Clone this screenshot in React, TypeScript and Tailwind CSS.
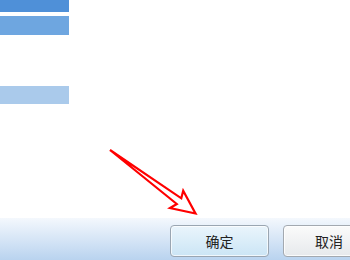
export default function App() {
  return (
    <div className="relative w-[350px] h-[260px] bg-white overflow-hidden flex flex-col font-['Microsoft_YaHei','Noto_Sans_CJK_SC',sans-serif]">
      {/* list rows */}
      <div className="flex-1 flex flex-col">
        <div className="w-[69px] h-[12px] bg-[#4f90d8]" />
        <div className="w-[69px] h-[19px] mt-[4px] bg-[#6ea6e0]" />
        <div className="w-[69px] h-[18px] mt-[51px] bg-[#aacaeb]" />
      </div>

      {/* button bar */}
      <div className="h-[42px] bg-gradient-to-b from-[#f4f8fd] to-[#b9d3ef] flex items-start pt-[7px] pl-[170px] gap-[14px]">
        <button className="w-[99px] h-[32px] shrink-0 rounded-[4px] border border-[#9aa6b2] bg-gradient-to-b from-[#eaf5fc] to-[#cbe5f5] text-[14px] text-[#222] shadow-[inset_0_0_0_1px_rgba(255,255,255,0.7)] pt-[1px]">
          确定
        </button>
        <button className="w-[99px] h-[32px] shrink-0 rounded-[4px] border border-[#a3a9b0] bg-gradient-to-b from-[#fbfbfb] to-[#e6e9ec] text-[14px] text-[#222] shadow-[inset_0_0_0_1px_rgba(255,255,255,0.8)] text-left pl-[31px] pt-[1px]">
          取消
        </button>
      </div>

      {/* red annotation arrow */}
      <svg className="absolute left-0 top-0" width="350" height="260" viewBox="0 0 350 260">
        <polygon
          points="110,150 181.3,198.3 183.2,190.8 195.5,213.5 170,208 176.8,204"
          fill="white"
          stroke="#ff0000"
          strokeWidth="2.2"
          strokeLinejoin="miter"
        />
      </svg>
    </div>
  );
}
